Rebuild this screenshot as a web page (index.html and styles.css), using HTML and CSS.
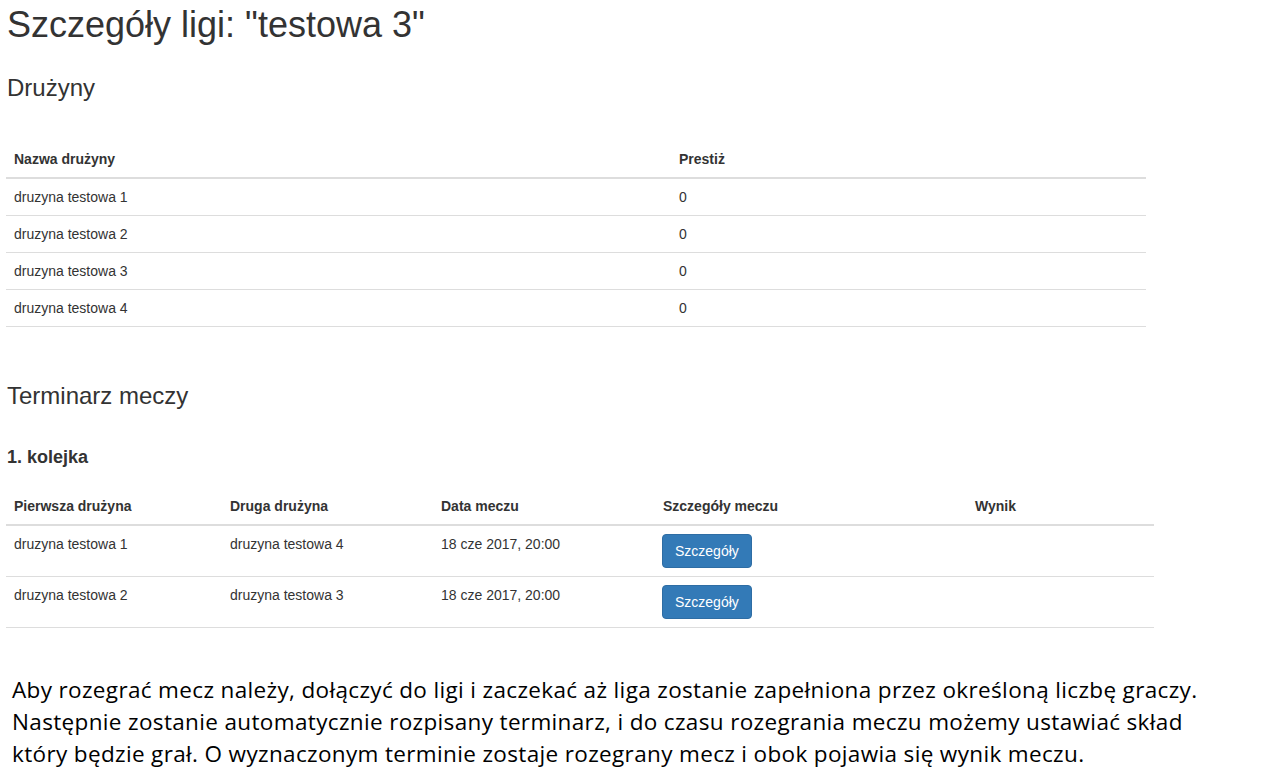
FILE: index.html
```html
<!DOCTYPE html>
<html lang="pl">
<head>
<meta charset="utf-8">
<title>Szczegóły ligi</title>
<link rel="stylesheet" href="styles.css">
</head>
<body>
<div class="page">
  <h1 class="title">Szczegóły ligi: "testowa 3"</h1>
  <h3 class="section section-teams">Drużyny</h3>
  <table class="table table-teams">
    <thead>
      <tr><th class="c-name">Nazwa drużyny</th><th>Prestiż</th></tr>
    </thead>
    <tbody>
      <tr><td>druzyna testowa 1</td><td>0</td></tr>
      <tr><td>druzyna testowa 2</td><td>0</td></tr>
      <tr><td>druzyna testowa 3</td><td>0</td></tr>
      <tr><td>druzyna testowa 4</td><td>0</td></tr>
    </tbody>
  </table>

  <h3 class="section section-schedule">Terminarz meczy</h3>
  <h4 class="round">1. kolejka</h4>
  <table class="table table-matches">
    <thead>
      <tr>
        <th class="m1">Pierwsza drużyna</th>
        <th class="m2">Druga drużyna</th>
        <th class="m3">Data meczu</th>
        <th class="m4">Szczegóły meczu</th>
        <th class="m5">Wynik</th>
      </tr>
    </thead>
    <tbody>
      <tr>
        <td>druzyna testowa 1</td>
        <td>druzyna testowa 4</td>
        <td>18 cze 2017, 20:00</td>
        <td><button class="btn">Szczegóły</button></td>
        <td></td>
      </tr>
      <tr>
        <td>druzyna testowa 2</td>
        <td>druzyna testowa 3</td>
        <td>18 cze 2017, 20:00</td>
        <td><button class="btn">Szczegóły</button></td>
        <td></td>
      </tr>
    </tbody>
  </table>

  <p class="note">Aby rozegrać mecz należy, dołączyć do ligi i zaczekać aż liga zostanie zapełniona przez określoną liczbę graczy.<br>Następnie zostanie automatycznie rozpisany terminarz, i do czasu rozegrania meczu możemy ustawiać skład<br>który będzie grał. O wyznaczonym terminie zostaje rozegrany mecz i obok pojawia się wynik meczu.</p>
</div>
</body>
</html>
```

FILE: styles.css
```css
* { box-sizing: border-box; }
html, body { margin: 0; padding: 0; background: #fff; }
body {
  font-family: "Liberation Sans", Arial, Helvetica, sans-serif;
  font-size: 14px;
  line-height: 1.42857;
  color: #333;
}
.page { padding: 5px 0 0 6px; }
.title {
  font-size: 36px;
  font-weight: 500;
  line-height: 1.1;
  margin: 0 0 30px 1px;
}
.section {
  font-size: 24px;
  font-weight: 500;
  line-height: 1.1;
  margin: 0 0 0 1px;
}
.section-teams { margin-bottom: 40px; }
.section-schedule { margin-top: 56px; margin-bottom: 39px; }
.round {
  font-size: 18px;
  font-weight: 700;
  line-height: 1.1;
  margin: 0 0 20px 1px;
}
.table { border-collapse: collapse; border-spacing: 0; }
.table th, .table td {
  padding: 8px;
  text-align: left;
  vertical-align: top;
  font-size: 14px;
  line-height: 20px;
  border-top: 1px solid #ddd;
}
.table thead th {
  font-weight: 700;
  vertical-align: bottom;
  border-top: 0;
  border-bottom: 2px solid #ddd;
}
.table-teams { width: 1140px; }
.table-teams tbody tr:last-child td { border-bottom: 1px solid #ddd; }
.c-name { width: 665px; }
.table-matches { width: 1148px; }
.table-matches tbody tr:last-child td { border-bottom: 1px solid #ddd; }
.m1 { width: 216px; }
.m2 { width: 211px; }
.m3 { width: 222px; }
.m4 { width: 312px; }
.m5 { width: 187px; }
.btn {
  display: inline-block;
  font-family: "Liberation Sans", Arial, sans-serif;
  font-size: 14px;
  line-height: 20px;
  height: 34px;
  padding: 6px 12px;
  color: #fff;
  background: #337ab7;
  border: 1px solid #2e6da4;
  border-radius: 4px;
  margin: 0 0 0 -1px;
  cursor: pointer;
}
.note {
  margin: 46px 0 0 6px;
  font-family: "Open Sans", "Noto Sans", sans-serif;
  font-size: 22.5px;
  letter-spacing: 0.35px;
  line-height: 32px;
  color: #000;
}
```
